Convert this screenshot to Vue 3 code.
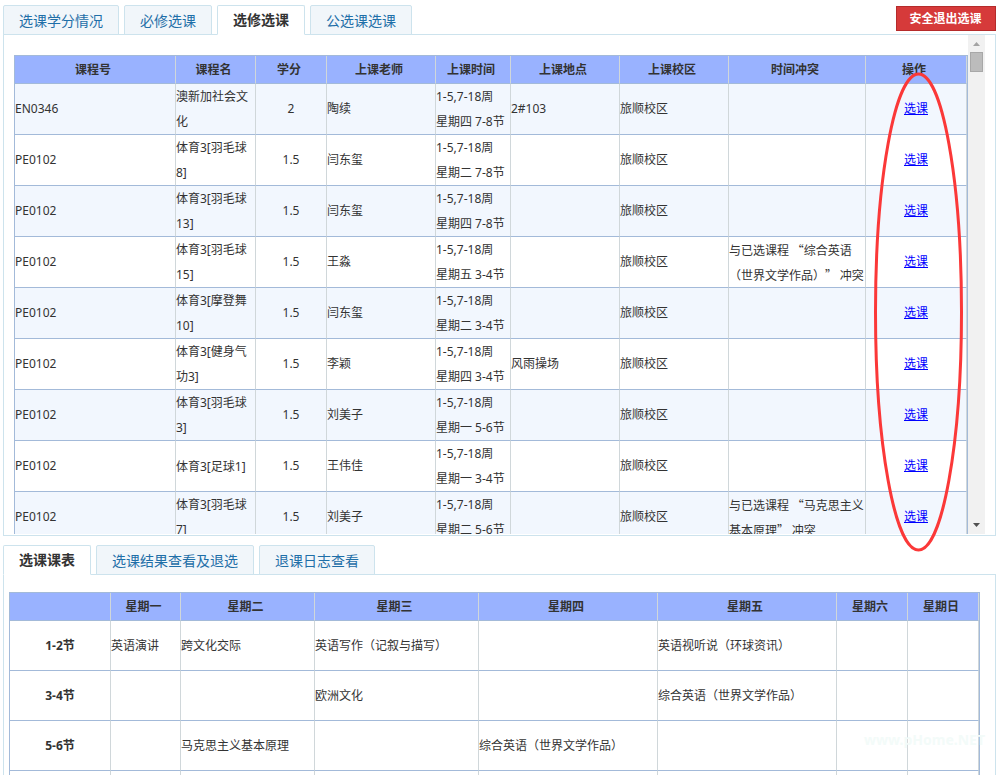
<script setup>
import { ref } from 'vue'

const courseTabs = ['选课学分情况', '必修选课', '选修选课', '公选课选课']
const activeCourseTab = ref(2)
const resultTabs = ['选课课表', '选课结果查看及退选', '退课日志查看']
const activeResultTab = ref(0)

const courseColumns = [
  { label: '课程号', width: 161 },
  { label: '课程名', width: 80 },
  { label: '学分', width: 71 },
  { label: '上课老师', width: 109 },
  { label: '上课时间', width: 75 },
  { label: '上课地点', width: 109 },
  { label: '上课校区', width: 109 },
  { label: '时间冲突', width: 137 },
  { label: '操作', width: 101 },
]

const campus = '旅顺校区'
const courses = [
  { code: 'EN0346', name: '澳新加社会文\n化', credit: '2', teacher: '陶续', time: '星期四 7-8节', place: '2#103', conflict: '' },
  { code: 'PE0102', name: '体育3[羽毛球\n8]', credit: '1.5', teacher: '闫东玺', time: '星期二 7-8节', place: '', conflict: '' },
  { code: 'PE0102', name: '体育3[羽毛球\n13]', credit: '1.5', teacher: '闫东玺', time: '星期四 7-8节', place: '', conflict: '' },
  { code: 'PE0102', name: '体育3[羽毛球\n15]', credit: '1.5', teacher: '王淼', time: '星期五 3-4节', place: '', conflict: '与已选课程 “综合英语\n（世界文学作品）” 冲突' },
  { code: 'PE0102', name: '体育3[摩登舞\n10]', credit: '1.5', teacher: '闫东玺', time: '星期二 3-4节', place: '', conflict: '' },
  { code: 'PE0102', name: '体育3[健身气\n功3]', credit: '1.5', teacher: '李颖', time: '星期四 3-4节', place: '风雨操场', conflict: '' },
  { code: 'PE0102', name: '体育3[羽毛球\n3]', credit: '1.5', teacher: '刘美子', time: '星期一 5-6节', place: '', conflict: '' },
  { code: 'PE0102', name: '体育3[足球1]', credit: '1.5', teacher: '王伟佳', time: '星期一 3-4节', place: '', conflict: '' },
  { code: 'PE0102', name: '体育3[羽毛球\n7]', credit: '1.5', teacher: '刘美子', time: '星期二 5-6节', place: '', conflict: '与已选课程 “马克思主义\n基本原理” 冲突' },
]

const dayColumns = [
  { label: '', width: 101 },
  { label: '星期一', width: 70 },
  { label: '星期二', width: 134 },
  { label: '星期三', width: 164 },
  { label: '星期四', width: 179 },
  { label: '星期五', width: 179 },
  { label: '星期六', width: 71 },
  { label: '星期日', width: 71 },
]

const periods = [
  { label: '1-2节', days: ['英语演讲', '跨文化交际', '英语写作（记叙与描写）', '', '英语视听说（环球资讯）', '', ''] },
  { label: '3-4节', days: ['', '', '欧洲文化', '', '综合英语（世界文学作品）', '', ''] },
  { label: '5-6节', days: ['', '马克思主义基本原理', '', '综合英语（世界文学作品）', '', '', ''] },
  { label: '', days: ['', '', '', '', '', '', ''] },
]
</script>

<template>
  <main class="page">
    <header class="bar">
      <nav class="tabs">
        <button
          v-for="(tab, i) in courseTabs"
          :key="tab"
          type="button"
          class="tab"
          :class="{ active: i === activeCourseTab }"
          @click="activeCourseTab = i"
        >{{ tab }}</button>
      </nav>
      <button type="button" class="exit">安全退出选课</button>
    </header>

    <section class="panel courses">
      <div class="viewport">
        <table class="grid striped">
          <colgroup>
            <col v-for="c in courseColumns" :key="c.label" :style="{ width: c.width + 'px' }" />
          </colgroup>
          <thead>
            <tr><th v-for="c in courseColumns" :key="c.label" scope="col">{{ c.label }}</th></tr>
          </thead>
          <tbody>
            <tr v-for="(c, i) in courses" :key="i">
              <td>{{ c.code }}</td>
              <td class="lines">{{ c.name }}</td>
              <td class="center">{{ c.credit }}</td>
              <td>{{ c.teacher }}</td>
              <td class="lines">1-5,7-18周<br />{{ c.time }}</td>
              <td>{{ c.place }}</td>
              <td>{{ campus }}</td>
              <td class="lines conflict">{{ c.conflict }}</td>
              <td class="center"><a href="#">选课</a></td>
            </tr>
          </tbody>
        </table>
      </div>
      <div class="scrollbar">
        <svg width="17" height="17" viewBox="0 0 17 17"><path d="M5 11h7L8.500 7z" fill="#a3a3a3" /></svg>
        <div class="thumb"></div>
        <svg class="down" width="17" height="17" viewBox="0 0 17 17"><path d="M5 6h7L8.500 10z" fill="#505050" /></svg>
      </div>
      <svg class="mark" width="90" height="480" viewBox="0 0 90 480">
        <ellipse cx="45.500" cy="240" rx="43" ry="238" fill="none" stroke="#fb3838" stroke-width="3" />
      </svg>
    </section>

    <nav class="tabs second">
      <button
        v-for="(tab, i) in resultTabs"
        :key="tab"
        type="button"
        class="tab"
        :class="{ active: i === activeResultTab }"
        @click="activeResultTab = i"
      >{{ tab }}</button>
    </nav>

    <section class="panel schedule">
      <table class="grid">
        <colgroup>
          <col v-for="d in dayColumns" :key="d.label" :style="{ width: d.width + 'px' }" />
        </colgroup>
        <thead>
          <tr><th v-for="d in dayColumns" :key="d.label" scope="col">{{ d.label }}</th></tr>
        </thead>
        <tbody>
          <tr v-for="(p, i) in periods" :key="i">
            <th scope="row">{{ p.label }}</th>
            <td v-for="(d, j) in p.days" :key="j">{{ d }}</td>
          </tr>
        </tbody>
      </table>
      <span class="watermark">www.pHome.NET</span>
    </section>
  </main>
</template>

<style>
body {
  background: #fff;
}
</style>

<style scoped>
.page {
  box-sizing: border-box;
  height: 100vh;
  overflow: hidden;
  padding: 5px 8px 0 3px;
  display: flex;
  flex-direction: column;
  font: 12px/25px "Noto Sans", "Noto Sans CJK SC", sans-serif;
  text-spacing-trim: space-all;
  color: #333;
}
.bar {
  display: flex;
  justify-content: space-between;
  align-items: flex-start;
}
.tabs {
  display: flex;
  gap: 5px;
  position: relative;
  z-index: 1;
  margin-bottom: -1px;
}
.second {
  margin-top: 9px;
}
.tab {
  box-sizing: border-box;
  height: 30px;
  padding: 0 15px;
  border: 1px solid #cde3ed;
  border-radius: 2px 2px 0 0;
  background: #f1f6fa;
  color: #1f6fa8;
  font: 14px/24px "Noto Sans CJK SC", sans-serif;
  white-space: nowrap;
  cursor: pointer;
}
.tab.active {
  padding-bottom: 2px;
  border-bottom-color: #fff;
  background: #fff;
  color: #333;
  font-weight: 700;
}
.exit {
  box-sizing: border-box;
  width: 100px;
  height: 25px;
  margin-top: 1px;
  padding: 0 1px 1px 0;
  border: 1px solid #b52b2b;
  background: #d63a3a;
  color: #fff;
  font: 700 12px/22px "Noto Sans CJK SC", sans-serif;
  cursor: pointer;
}
.panel {
  position: relative;
  border: 1px solid #cde3ed;
}
.courses {
  flex: none;
  display: flex;
  padding: 0 10px 1px;
}
.viewport {
  flex: 1;
  min-width: 0;
  height: 499px;
  overflow: hidden;
}
.viewport .grid {
  margin-top: 20px;
}
.scrollbar {
  display: flex;
  flex-direction: column;
  width: 17px;
  background: #f1f1f1;
}
.thumb {
  box-sizing: border-box;
  height: 20px;
  margin: 0 2px;
  border: 1px solid #a8a8a8;
  background: #bcbcbc;
}
.down {
  margin-top: auto;
}
.mark {
  position: absolute;
  top: 37px;
  right: 32px;
  z-index: 2;
  pointer-events: none;
}
.schedule {
  flex: 1 0 auto;
  padding: 17px 15px 0 5px;
}
.grid {
  width: 100%;
  table-layout: fixed;
  border-collapse: separate;
  border-spacing: 0;
  border: 1px solid #a3bad9;
  border-bottom: 0;
}
.grid th,
.grid td {
  box-sizing: border-box;
  height: 51px;
  padding: 0;
  border-right: 1px solid #d0d7da;
  border-bottom: 1px solid #a3bad9;
  text-align: left;
  vertical-align: middle;
}
.grid th {
  text-align: center;
  font-weight: 700;
}
.grid thead th {
  height: 28px;
  padding-right: 4px;
  background: #99b2ff;
}
.striped tbody td:not(.lines) {
  padding-bottom: 2px;
}
.schedule tbody th,
.schedule tbody td {
  height: 50px;
}
.striped tbody tr:nth-child(odd) {
  background: #f2f7fe;
}
.grid .center {
  text-align: center;
}
.lines {
  white-space: pre;
}
.conflict {
  font-family: "Noto Sans CJK SC", sans-serif;
}
.grid a {
  color: #00f;
  text-decoration: underline;
}
.watermark {
  position: absolute;
  top: 152px;
  right: 10px;
  color: #f3fbf9;
  font-size: 14px;
  font-weight: 700;
}
</style>
